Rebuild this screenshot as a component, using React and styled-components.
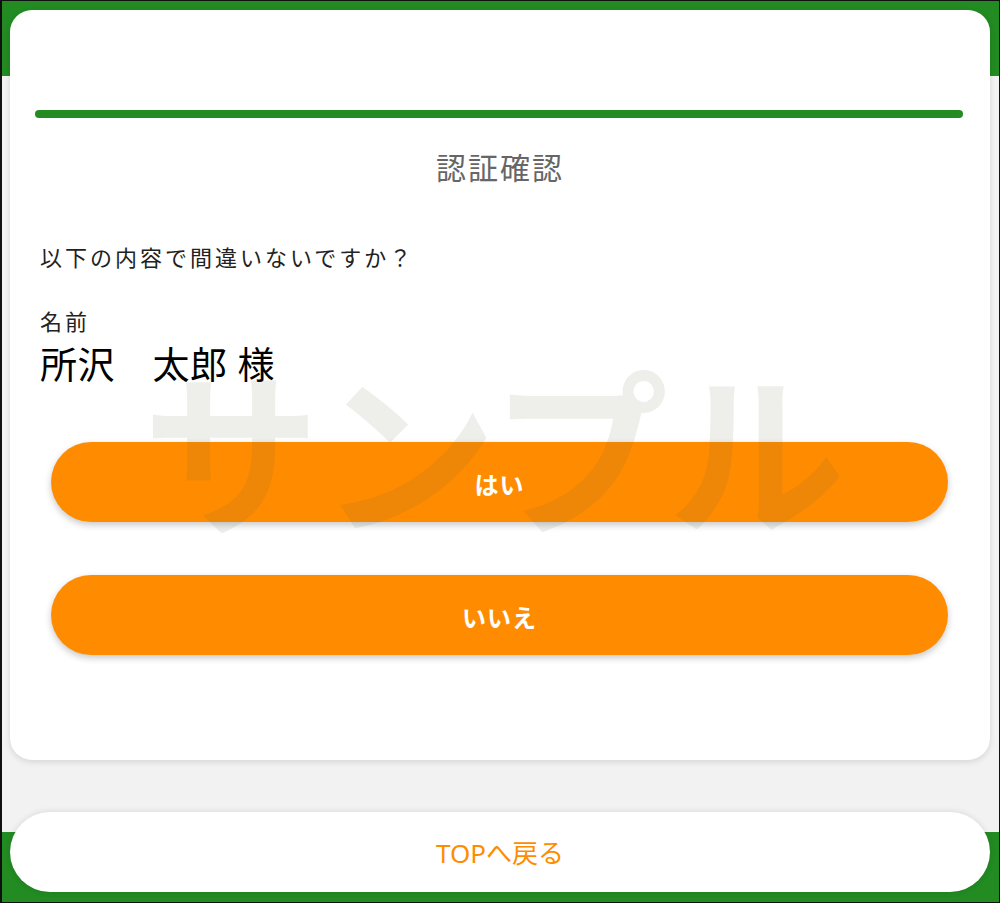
import React from "react";
import styled, { createGlobalStyle } from "styled-components";

const GREEN = "#228b22";
const ORANGE = "#ff8c00";

const Global = createGlobalStyle`
  html, body { margin: 0; padding: 0; }
  body {
    font-family: "Noto Sans", "Noto Sans CJK JP", sans-serif;
    background: #f2f2f2;
  }
  * { box-sizing: border-box; }
`;

const Frame = styled.div`
  width: 1000px;
  height: 903px;
  border: 1px solid #111;
  border-left-width: 2px;
  padding: 9px 9px 10px 8px;
  display: flex;
  flex-direction: column;
  gap: 52px;
  background: linear-gradient(
    to bottom,
    ${GREEN} 0,
    ${GREEN} 75px,
    #f2f2f2 75px,
    #f2f2f2 831px,
    ${GREEN} 831px
  );
`;

const Card = styled.main`
  position: relative;
  background: #fff;
  border-radius: 22px;
  box-shadow: 0 2px 6px rgba(0, 0, 0, 0.12);
  padding: 100px 0 105px;
  display: flex;
  flex-direction: column;
  overflow: hidden;
`;

const Progress = styled.div`
  height: 9px;
  margin: 0 27px 0 25px;
  border-radius: 5px;
  background: ${GREEN};
`;

const Title = styled.h1`
  margin: 30px 0 0;
  font-size: 30px;
  line-height: 40px;
  font-weight: 400;
  letter-spacing: 2px;
  color: #666;
  text-align: center;
`;

const Question = styled.p`
  margin: 54px 0 0;
  padding-left: 30px;
  font-size: 22px;
  line-height: 30px;
  letter-spacing: 3px;
  color: #222;
`;

const Label = styled.div`
  margin-top: 35px;
  padding-left: 30px;
  font-size: 22px;
  line-height: 28px;
  letter-spacing: 3px;
  color: #222;
`;

const Name = styled.div`
  margin-top: 8px;
  padding-left: 30px;
  font-size: 37px;
  line-height: 44px;
  letter-spacing: 0.5px;
  color: #000;
`;

const Actions = styled.div`
  margin: 55px 42px 0 41px;
  display: flex;
  flex-direction: column;
  gap: 53px;
`;

const ActionButton = styled.button`
  height: 80px;
  padding-top: 3px;
  border: none;
  border-radius: 40px;
  background: ${ORANGE};
  color: #fff;
  font-family: inherit;
  font-size: 24px;
  font-weight: 700;
  letter-spacing: 1px;
  box-shadow: 0 3px 7px rgba(0, 0, 0, 0.22);
  cursor: pointer;
`;

const Watermark = styled.div`
  position: absolute;
  left: 0;
  right: 12px;
  top: 355px;
  text-align: center;
  font-size: 177px;
  line-height: 1;
  font-weight: 700;
  color: rgba(100, 100, 60, 0.11);
  pointer-events: none;
  white-space: nowrap;
`;

const BackButton = styled.button`
  height: 80px;
  flex-shrink: 0;
  border: none;
  border-radius: 40px;
  background: #fff;
  color: ${ORANGE};
  font-family: inherit;
  font-size: 26px;
  font-weight: 400;
  box-shadow: 0 0 6px rgba(0, 0, 0, 0.12);
  cursor: pointer;
`;

export default function App() {
  return (
    <>
      <Global />
      <Frame>
        <Card>
          <Progress />
          <Title>認証確認</Title>
          <Question>以下の内容で間違いないですか？</Question>
          <Label>名前</Label>
          <Name>所沢　太郎 様</Name>
          <Actions>
            <ActionButton>はい</ActionButton>
            <ActionButton>いいえ</ActionButton>
          </Actions>
          <Watermark>サンプル</Watermark>
        </Card>
        <BackButton>TOPへ戻る</BackButton>
      </Frame>
    </>
  );
}
